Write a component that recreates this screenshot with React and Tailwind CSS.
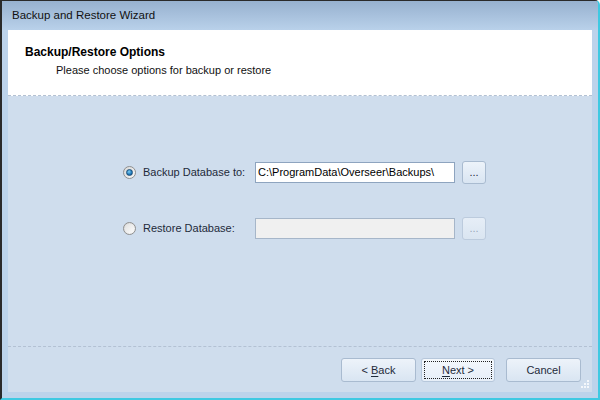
import React from "react";

const font = { fontFamily: '"Liberation Sans", Arial, sans-serif' };

function Radio({ checked }) {
  return (
    <span className="relative flex h-[13px] w-[13px] items-center justify-center rounded-full border border-[#8f8f8f] bg-gradient-to-br from-[#d8d8d8] to-[#f8f8f8]">
      {checked ? (
        <span className="h-[7px] w-[7px] rounded-full border border-[#1b4f7a] bg-[radial-gradient(circle_at_40%_35%,#7fd0f5,#1f77b8_60%,#0f4f86)]" />
      ) : (
        <span className="h-[9px] w-[9px] rounded-full bg-gradient-to-br from-[#e2e2e2] to-[#fbfbfb]" />
      )}
    </span>
  );
}

function Btn({ children, focus, disabled, className = "" }) {
  return (
    <div
      className={
        "flex items-center justify-center rounded-[3px] border text-[11px] " +
        (disabled
          ? "border-[#bccbdd] bg-gradient-to-b from-[#e6eef7] to-[#dae5f1] text-[#9aa8b8] "
          : focus
          ? "border-[#b6c7db] bg-gradient-to-b from-[#f4f8fc] to-[#e6eef8] text-[#1e2a3a] "
          : "border-[#a9bbd0] bg-gradient-to-b from-[#edf3fa] to-[#d9e5f2] text-[#1e2a3a] ") +
        className
      }
    >
      {focus ? (
        <div className="flex h-full w-full items-center justify-center p-[2px]">
          <div className="flex h-full w-full items-center justify-center border border-dotted border-[#222]">
            {children}
          </div>
        </div>
      ) : (
        children
      )}
    </div>
  );
}

export default function App() {
  return (
    <div
      style={font}
      className="flex h-[400px] w-[600px] flex-col overflow-hidden rounded-tr-[5px] border-t border-l-2 border-r-2 border-b-2 border-t-[#2a2a2a] border-l-[#2a2a2a] border-r-[#3fc9e2] border-b-[#3fc9e2] bg-[#bcd3eb]"
    >
      <div className="flex h-[29px] items-center bg-gradient-to-b from-[#97b1cf] to-[#b9d1ea] pl-[10px] text-[11.5px] text-[#111]">
        Backup and Restore Wizard
      </div>
      <div className="relative ml-[6px] mr-[6px] flex flex-1 flex-col bg-[#cfdded]">
        <div className="h-[66px] border-b border-dashed border-b-[#b3c1d3] bg-white pl-[17px] pt-[15px]">
          <div className="text-[12px] font-bold leading-[15px] text-black">Backup/Restore Options</div>
          <div className="pl-[31px] pt-[3px] text-[11px] leading-[15px] text-[#111]">
            Please choose options for backup or restore
          </div>
        </div>
        <div className="flex flex-1 flex-col gap-[32px] pl-[115px] pt-[64px]">
          <div className="flex h-[24px] items-center">
            <div className="flex w-[132px] items-center gap-[7px] text-[11px] text-[#1e2a3a]">
              <Radio checked />
              <span>Backup Database to:</span>
            </div>
            <div className="flex h-[21px] w-[200px] items-center border border-[#8ea4bf] bg-white pl-[2px] text-[11px] text-black">
              C:\ProgramData\Overseer\Backups\
            </div>
            <Btn className="ml-[7px] h-[23px] w-[24px]">...</Btn>
          </div>
          <div className="flex h-[24px] items-center">
            <div className="flex w-[132px] items-center gap-[7px] text-[11px] text-[#1e2a3a]">
              <Radio />
              <span>Restore Database:</span>
            </div>
            <div className="h-[21px] w-[200px] border border-[#a6b6c9] bg-[#f0f0f0]" />
            <Btn disabled className="ml-[7px] h-[23px] w-[24px]">...</Btn>
          </div>
        </div>
        <div className="flex h-[46px] items-start justify-end border-t border-dashed border-t-[#b3c1d3] pr-[11px] pt-[11px]">
          <Btn className="h-[24px] w-[75px]">
            &lt; <span className="ml-[3px] underline underline-offset-2">B</span>ack
          </Btn>
          <Btn focus className="ml-[5px] h-[24px] w-[74px]">
            <span className="underline underline-offset-2">N</span>ext &gt;
          </Btn>
          <Btn className="ml-[11px] h-[24px] w-[75px]">Cancel</Btn>
        </div>
        <svg className="absolute bottom-[3px] right-[2px]" width="9" height="9" viewBox="0 0 9 9">
          {[
            [6, 0],
            [3, 3],
            [6, 3],
            [0, 6],
            [3, 6],
            [6, 6],
          ].map(([x, y], i) => (
            <rect key={i} x={x} y={y} width="2" height="2" fill="#f4f7fb" />
          ))}
        </svg>
      </div>
      <div className="h-[6px]" />
    </div>
  );
}
